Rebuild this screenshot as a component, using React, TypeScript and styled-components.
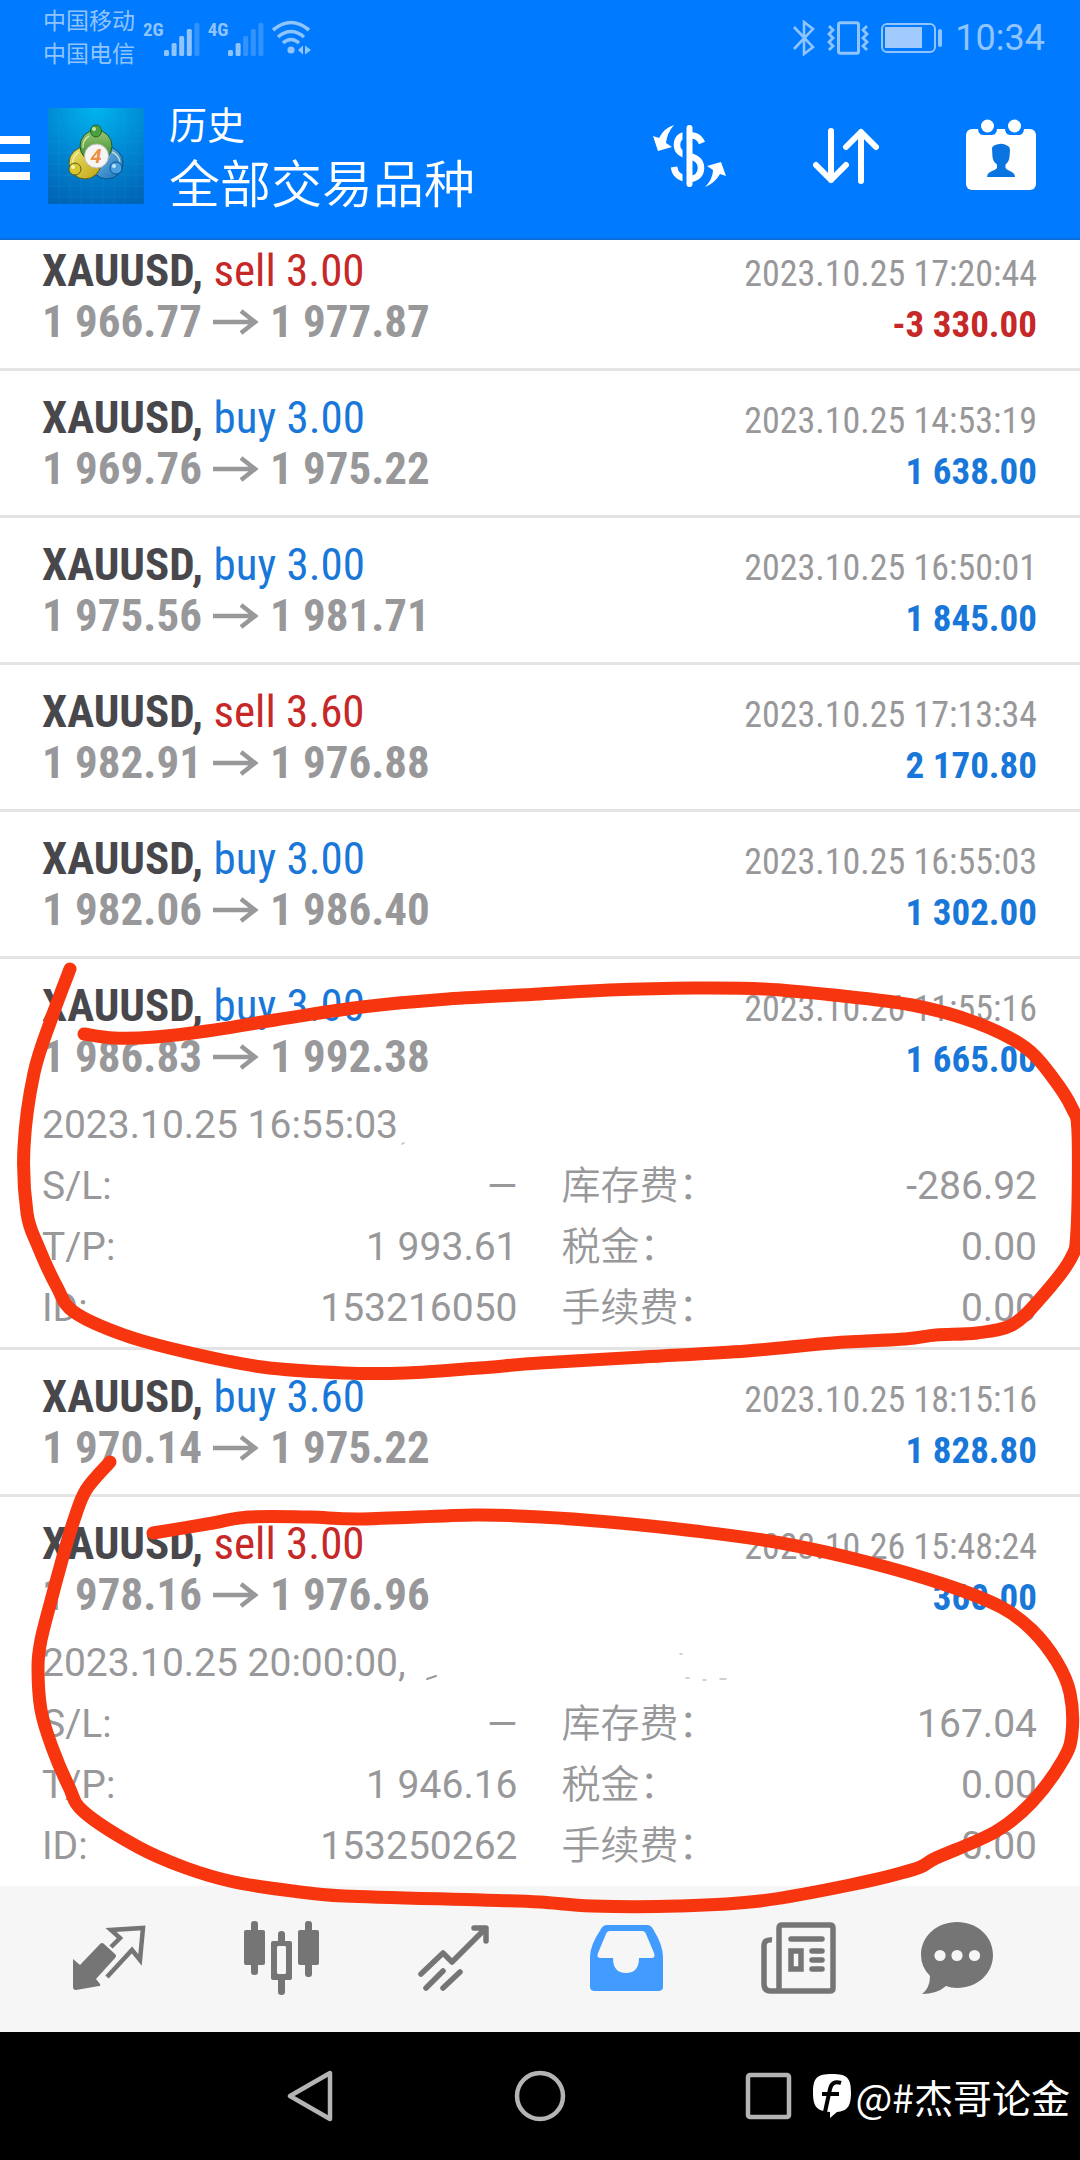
import React from 'react';
import styled, { createGlobalStyle } from 'styled-components';

const condensed = '"Roboto Condensed", "Liberation Sans Narrow", Roboto, "Noto Sans CJK SC", sans-serif';
const regular = 'Roboto, "Noto Sans CJK SC", sans-serif';

const colors = {
  brand: '#007aff',
  status: '#90c4fd',
  sell: '#c62828',
  buy: '#1877d8',
  symbol: '#48484c',
  muted: '#98989a',
  line: '#e4e4e4',
  tab: '#757575',
  active: '#429bff',
  marker: '#f7360f',
};

const GlobalStyle = createGlobalStyle`
  * { box-sizing: border-box; }
  body { margin: 0; background: #000; font-family: ${regular}; }
  button { border: 0; padding: 0; background: none; color: inherit; cursor: pointer; }
  svg { display: block; }
`;

const Page = styled.div`
  position: relative;
  display: flex;
  flex-direction: column;
  min-height: 100vh;
  background: #fff;
  overflow: hidden;
`;

const Top = styled.header`
  background: ${colors.brand};
  color: #fff;
  border-bottom: 2px solid #0d6fdc;
`;

const StatusBar = styled.div`
  display: flex;
  align-items: center;
  justify-content: space-between;
  height: 74px;
  padding: 2px 35px 0 43px;
  color: ${colors.status};
`;

const StatusGroup = styled.div<{ $gap: number }>`
  display: flex;
  align-items: center;
  gap: ${(p) => p.$gap}px;
`;

const Carriers = styled.div`
  font-size: 23px;
  line-height: 33px;
`;

const Signal = styled.div`
  display: flex;
  font: 700 19px/20px ${condensed};
`;

const SignalIcon = styled.svg`
  margin-top: 2px;
`;

const Clock = styled.time`
  font-size: 36px;
  line-height: 40px;
`;

const Toolbar = styled.div`
  display: flex;
  align-items: center;
  height: 164px;
  padding-right: 44px;
`;

const MenuButton = styled.button`
  display: flex;
  flex-direction: column;
  gap: 10px;
  width: 30px;
  margin: 4px 18px 0 0;

  span { height: 8px; background: #fff; }
`;

const Titles = styled.div`
  flex: 1;
  margin-left: 25px;
  padding-top: 6px;
`;

const Title = styled.h1`
  margin: 0;
  font-size: 38px;
  font-weight: 400;
  line-height: 54px;
`;

const Subtitle = styled.div`
  font-size: 51px;
  font-weight: 350;
  line-height: 66px;
`;

const Actions = styled.div`
  display: flex;
  align-items: center;
  gap: 87px;
`;

const List = styled.ul`
  flex: 1;
  margin: 0;
  padding: 0;
  list-style: none;
`;

const Row = styled.li`
  padding: 21px 43px 21px 42px;
  border-bottom: 3px solid ${colors.line};

  &:first-child { padding-top: 5px; }
  &:has(dl) { padding-bottom: 8px; }
  &:last-child { border-bottom: 0; }
`;

const Line = styled.div`
  display: flex;
  align-items: baseline;
  justify-content: space-between;
  height: 51px;
  font-family: ${condensed};
  font-size: 45px;
  line-height: 51px;
  white-space: nowrap;
`;

const Symbol = styled.span`
  color: ${colors.symbol};
  font-weight: 700;
`;

const Side = styled.span<{ $side: string }>`
  color: ${(p) => (p.$side === 'sell' ? colors.sell : colors.buy)};
`;

const CloseTime = styled.time`
  color: ${colors.muted};
  font-size: 36px;
`;

const Prices = styled.span`
  display: flex;
  align-items: center;
  gap: 11px;
  color: ${colors.muted};
  font-weight: 700;
`;

const Profit = styled.span<{ $loss: boolean }>`
  color: ${(p) => (p.$loss ? colors.sell : colors.buy)};
  font-size: 37px;
  font-weight: 700;
`;

const Details = styled.div`
  margin-top: 13px;
  color: ${colors.muted};
  font-size: 39px;
  line-height: 61px;
`;

const Fields = styled.dl`
  display: grid;
  grid-template-columns: 1fr 1fr;
  column-gap: 44px;
  margin: 0;
`;

const Field = styled.div`
  display: flex;
  justify-content: space-between;

  &:nth-child(even) dt { font-weight: 350; }
  dd { margin: 0; }
`;

const Tabs = styled.nav`
  display: grid;
  grid-template-columns: repeat(5, 172fr) 144fr;
  height: 146px;
  padding: 0 51px 3px 23px;
  background: #f6f6f6;
`;

const Tab = styled.button<{ $active?: boolean }>`
  display: flex;
  align-items: center;
  justify-content: center;
  color: ${(p) => (p.$active ? colors.active : colors.tab)};
`;

const SystemNav = styled.nav`
  position: relative;
  display: flex;
  align-items: center;
  justify-content: center;
  gap: 179px;
  height: 128px;
  background: #000;
  color: #b4b4b4;
`;

const Watermark = styled.div`
  position: absolute;
  right: 10px;
  top: 39px;
  display: flex;
  align-items: center;
  gap: 4px;
  color: #fff;
  font: 400 39px/50px "Noto Sans CJK SC", sans-serif;
`;

const Annotation = styled.svg`
  position: absolute;
  inset: 0;
  width: 100%;
  pointer-events: none;
`;

type Detail = { opened: string; tp: string; id: string; swap: string };
type Deal = {
  side: 'buy' | 'sell';
  volume: string;
  open: string;
  close: string;
  time: string;
  profit: string;
  detail?: Detail;
};

const deals: Deal[] = [
  { side: 'sell', volume: '3.00', open: '1 966.77', close: '1 977.87', time: '2023.10.25 17:20:44', profit: '-3 330.00' },
  { side: 'buy', volume: '3.00', open: '1 969.76', close: '1 975.22', time: '2023.10.25 14:53:19', profit: '1 638.00' },
  { side: 'buy', volume: '3.00', open: '1 975.56', close: '1 981.71', time: '2023.10.25 16:50:01', profit: '1 845.00' },
  { side: 'sell', volume: '3.60', open: '1 982.91', close: '1 976.88', time: '2023.10.25 17:13:34', profit: '2 170.80' },
  { side: 'buy', volume: '3.00', open: '1 982.06', close: '1 986.40', time: '2023.10.25 16:55:03', profit: '1 302.00' },
  {
    side: 'buy', volume: '3.00', open: '1 986.83', close: '1 992.38', time: '2023.10.26 11:55:16', profit: '1 665.00',
    detail: { opened: '2023.10.25 16:55:03', tp: '1 993.61', id: '153216050', swap: '-286.92' },
  },
  { side: 'buy', volume: '3.60', open: '1 970.14', close: '1 975.22', time: '2023.10.25 18:15:16', profit: '1 828.80' },
  {
    side: 'sell', volume: '3.00', open: '1 978.16', close: '1 976.96', time: '2023.10.26 15:48:24', profit: '360.00',
    detail: { opened: '2023.10.25 20:00:00,', tp: '1 946.16', id: '153250262', swap: '167.04' },
  },
];

type Point = [number, number];

const firstLoop: Point[] = [
  [70, 969], [52, 1017], [34, 1073], [24, 1147], [27, 1213], [38, 1246], [57, 1287], [74, 1312], [124, 1335],
  [186, 1352], [262, 1367], [344, 1373], [406, 1373], [479, 1368], [540, 1363], [643, 1357], [747, 1351],
  [833, 1343], [905, 1339], [936, 1335], [977, 1333], [1012, 1325], [1039, 1300], [1070, 1260], [1077, 1230],
  [1078, 1133], [1072, 1108], [1053, 1078], [1026, 1048], [977, 1023], [912, 1005], [833, 995], [764, 989],
  [695, 988], [609, 990], [540, 994], [448, 999], [362, 1007], [275, 1020], [207, 1031], [155, 1037],
  [114, 1038], [84, 1034],
];

const secondLoop: Point[] = [
  [110, 1462], [86, 1490], [74, 1520], [64, 1553], [52, 1597], [41, 1640], [38, 1667], [41, 1710], [52, 1747],
  [69, 1787], [84, 1812], [138, 1847], [186, 1868], [234, 1882], [293, 1891], [344, 1896], [482, 1900],
  [540, 1902], [592, 1906], [678, 1906], [760, 1901], [850, 1885], [915, 1869], [936, 1858], [995, 1832],
  [1032, 1802], [1063, 1760], [1072, 1733], [1070, 1693], [1057, 1662], [1032, 1630], [1001, 1607],
  [946, 1585], [867, 1562], [781, 1543], [695, 1531], [609, 1522], [540, 1517], [475, 1515], [362, 1519],
  [310, 1517], [248, 1517], [213, 1523], [153, 1533],
];

/* Runs a smooth pen line through every recorded point. */
function penPath(points: Point[]) {
  let d = `M${points[0][0]} ${points[0][1]}`;
  for (let i = 0; i < points.length - 1; i++) {
    const a = points[Math.max(i - 1, 0)];
    const b = points[i];
    const c = points[i + 1];
    const e = points[Math.min(i + 2, points.length - 1)];
    d += `C${b[0] + (c[0] - a[0]) / 6} ${b[1] + (c[1] - a[1]) / 6} ${c[0] - (e[0] - b[0]) / 6} ${c[1] - (e[1] - b[1]) / 6} ${c[0]} ${c[1]}`;
  }
  return d;
}

function SignalBars({ level }: { level: number }) {
  return (
    <SignalIcon width="36" height="34" viewBox="0 0 36 34" fill="currentColor" aria-hidden="true">
      {[6, 13, 20, 27, 33].map((h, i) => (
        <rect key={h} x={i * 7.6} y={34 - h} width="5" height={h} rx="1.5" opacity={i < level ? 1 : 0.35} />
      ))}
    </SignalIcon>
  );
}

function WifiIcon() {
  return (
    <svg width="40" height="36" viewBox="0 0 40 36" fill="none" stroke="currentColor" strokeWidth="3.6" aria-hidden="true">
      <path d="M1 10Q19 -5 37 10M6 17Q19 6 32 17M11 23Q19 16 27 23" />
      <circle cx="19" cy="30" r="3.600" fill="currentColor" stroke="none" />
      <path d="M31 25.500v9l-5-4.500zM33 25.500v9l6-4.500z" fill="currentColor" stroke="none" />
    </svg>
  );
}

function BluetoothIcon() {
  return (
    <svg width="22" height="36" viewBox="0 0 22 36" fill="none" stroke="currentColor" strokeWidth="2.600" aria-hidden="true">
      <path d="M1 7l19 20-9 7V2l9 7L1 29" />
    </svg>
  );
}

function VibrateIcon() {
  return (
    <svg width="42" height="34" viewBox="0 0 42 34" fill="none" stroke="currentColor" strokeWidth="3" aria-hidden="true">
      <rect x="11.500" y="1.800" width="20" height="30.500" rx="2" />
      <path d="M2 5l4 4-4 4 4 4-4 4 4 4-4 4M40 5l-4 4 4 4-4 4 4 4-4 4 4 4" strokeWidth="2.800" />
    </svg>
  );
}

function BatteryIcon() {
  return (
    <svg width="62" height="30" viewBox="0 0 62 30" aria-hidden="true">
      <rect x="1" y="1" width="53" height="28" rx="5" fill="none" stroke="currentColor" strokeWidth="2" />
      <rect x="4" y="4" width="37" height="21" fill="#a0cbfc" />
      <rect x="57" y="6" width="4" height="18" rx="2" fill="currentColor" />
    </svg>
  );
}

function AppLogo() {
  return (
    <svg width="96" height="96" viewBox="0 0 96 96" aria-hidden="true">
      <defs>
        <radialGradient id="sky" cx="50%" cy="0%" r="105%">
          <stop offset="0" stopColor="#00b4ee" />
          <stop offset="0.500" stopColor="#0089d4" />
          <stop offset="1" stopColor="#0064b4" />
        </radialGradient>
        <linearGradient id="leaf" x2="0" y2="1"><stop stopColor="#9cc873" /><stop offset="1" stopColor="#2c8428" /></linearGradient>
        <linearGradient id="sun" x2="1" y2="1"><stop stopColor="#eee36b" /><stop offset="1" stopColor="#bfa414" /></linearGradient>
        <linearGradient id="sea" x2="1" y2="1"><stop stopColor="#86c4ec" /><stop offset="1" stopColor="#126fba" /></linearGradient>
      </defs>
      <rect width="96" height="96" fill="url(#sky)" />
      <path d="M11 0v96M22 0v96M33 0v96M44 0v96M55 0v96M66 0v96M77 0v96M88 0v96M0 12h96M0 23h96M0 34h96M0 45h96M0 56h96M0 67h96M0 78h96M0 89h96" stroke="#40aef0" strokeWidth="0.600" opacity="0.200" />
      <circle cx="59" cy="55" r="16" fill="url(#sea)" stroke="#0b4f86" />
      <circle cx="37" cy="55" r="16" fill="url(#sun)" stroke="#54631a" />
      <circle cx="48" cy="38" r="16" fill="url(#leaf)" stroke="#1c5a2c" />
      <path d="M35 40a13 13 0 0 1 6-12M25 58a13 13 0 0 1 6-14M64 44a13 13 0 0 1 8 10" fill="none" stroke="#f3f6c8" strokeWidth="1.500" opacity="0.700" />
      <ellipse cx="48" cy="23" rx="5.500" ry="6" fill="#4da040" stroke="#23662b" />
      <circle cx="27" cy="61" r="6" fill="#d9c52e" stroke="#5e5f17" />
      <circle cx="68" cy="60" r="6" fill="#48a0de" stroke="#0d5592" />
      <circle cx="46" cy="21" r="2" fill="#c4e6a8" />
      <circle cx="25" cy="59" r="2" fill="#faf5b4" />
      <circle cx="66" cy="58" r="2" fill="#c3e5fb" />
      <circle cx="48.500" cy="48" r="12" fill="#f5f6f4" stroke="#b6bcb6" />
      <text x="48" y="55" textAnchor="middle" fontFamily="Roboto, sans-serif" fontSize="20" fontWeight="700" fontStyle="italic" fill="#ee8f45">4</text>
    </svg>
  );
}

function CurrencyIcon() {
  return (
    <svg width="73" height="62" viewBox="0 0 73 62" fill="none" stroke="#fff" aria-hidden="true">
      <path d="M49 18C46 11 41 10 34 10C27 10 24 14 24 20C24 27 29 29 36 31C45 33 48 37 48 43C48 50 43 54 36 54C28 54 22 50 21 42" strokeWidth="6.500" />
      <path d="M34 0v62" stroke={colors.brand} strokeWidth="9" />
      <path d="M36.500 3v56" strokeWidth="6" strokeLinecap="round" />
      <path d="M21 0Q11 3 6 13L0 11L5 26L19 22L13 18Q14 8 21 0zM52 62Q62 58 67 49L73 51L68 37L54 41L60 45Q60 54 52 62z" fill="#fff" stroke="none" />
    </svg>
  );
}

function SortIcon() {
  return (
    <svg width="66" height="56" viewBox="0 0 66 56" fill="none" stroke="#fff" strokeWidth="6" strokeLinecap="round" strokeLinejoin="round" aria-hidden="true">
      <path d="M18 3v49M3 37l15 15 15-15M48 53V4M33 19L48 4l15 15" />
    </svg>
  );
}

function AccountIcon() {
  return (
    <svg width="70" height="74" viewBox="0 0 70 74" aria-hidden="true">
      <rect y="10" width="70" height="61" rx="6" fill="#fff" />
      <path d="M12 9h19q0 7-5 7h-9q-5 0-5-7zM39 9h19q0 7-5 7h-9q-5 0-5-7z" fill={colors.brand} />
      <circle cx="21.500" cy="7" r="6.500" fill="#fff" />
      <circle cx="48.500" cy="7" r="6.500" fill="#fff" />
      <path d="M26 29Q27 26 31 25.500Q36 23.500 42 27Q44 28 44 31L43.500 38Q43 43 39.500 45.500V49Q41 51 44 52Q49 54 49 58H21Q21 54 26 52Q29.500 51 31 49V45.500Q27 43 26.500 38z" fill="#0a74e0" />
    </svg>
  );
}

function ArrowIcon() {
  return (
    <svg width="46" height="26" viewBox="0 0 46 26" fill="none" stroke="currentColor" strokeWidth="4.500" aria-hidden="true">
      <path d="M0 13h43M28 2l14 11-14 11" />
    </svg>
  );
}

function QuotesIcon() {
  return (
    <svg width="73" height="66" viewBox="0 0 73 66" aria-hidden="true">
      <path d="M0 34l7 6L27 19q2-2 4 0l11 10q2 2 0 4L23 54l4 5q1 2-1 2L3 65q-3 0-3-3z" fill="currentColor" />
      <path d="M38 22l9-9-9-8 32-2-3 32-8-10-25 27" fill="none" stroke="currentColor" strokeWidth="4.500" />
    </svg>
  );
}

function CandlesIcon() {
  return (
    <svg width="75" height="74" viewBox="0 0 75 74" fill="currentColor" aria-hidden="true">
      <rect x="7" width="7" height="54" rx="3" />
      <rect y="9" width="21" height="35" rx="2" />
      <rect x="61" width="7" height="56" rx="3" />
      <rect x="54" y="9" width="21" height="35" rx="2" />
      <path d="M34 74V59h-5q-2 0-2-2V22q0-2 2-2h5v-7q0-3 3.500-3t3.500 3v7h5q2 0 2 2v35q0 2-2 2h-5v12q0 3-3.500 3T34 71zM34 25q-1 0-1 2v24q0 2 1 2h7q1 0 1-2V27q0-2-1-2z" fillRule="evenodd" />
    </svg>
  );
}

function TrendIcon() {
  return (
    <svg width="71" height="66" viewBox="0 0 71 66" fill="none" stroke="currentColor" strokeWidth="5.500" strokeLinecap="round" strokeLinejoin="round" aria-hidden="true">
      <path d="M3 49l22-21 9 9L67 4M56 3h12v13M25 46L8 63M42 47L25 63" />
    </svg>
  );
}

function InboxIcon() {
  return (
    <svg width="73" height="68" viewBox="0 0 73 68" fill="currentColor" aria-hidden="true">
      <path d="M17 1h40q4 0 6 4 10 16 10 28v30q0 4-5 4H5q-5 0-5-4V33Q0 21 11 5q2-4 6-4zM20 7q-3 0-4 3L8 29q-2 5 3 5h12q0 15 13 15t13-15h12q5 0 3-5L56 10q-1-3-4-3z" fillRule="evenodd" />
    </svg>
  );
}

function NewsIcon() {
  return (
    <svg width="75" height="72" viewBox="0 0 75 72" fill="none" stroke="currentColor" strokeWidth="5.500" aria-hidden="true">
      <path d="M11 18q-8-1-8 6v38q0 7 7 7h59q3 0 3-3V6q0-3-3-3H21q-3 0-3 3v63" />
      <path d="M30 17h31M51 29h10M51 38h10M51 47h10" strokeLinecap="round" />
      <rect x="30" y="29" width="10" height="18" strokeWidth="5.500" />
    </svg>
  );
}

function ChatIcon() {
  return (
    <svg width="72" height="72" viewBox="0 0 72 72" aria-hidden="true">
      <path d="M36 0c20 0 36 14 36 33S56 66 36 66q-6 0-11-2-9 8-24 8 8-6 8-18Q0 45 0 33C0 14 16 0 36 0z" fill="currentColor" />
      <circle cx="19" cy="33.500" r="5.600" fill="#f6f6f6" />
      <circle cx="36" cy="33.500" r="5.600" fill="#f6f6f6" />
      <circle cx="53.500" cy="33.500" r="5.600" fill="#f6f6f6" />
    </svg>
  );
}

function WatermarkLogo() {
  return (
    <svg width="38" height="44" viewBox="0 0 38 44" aria-hidden="true">
      <path d="M19 0c15 0 19 4 19 18.500S34 37 24 38l-7 6v-6C4 37 0 33 0 18.500S4 0 19 0z" fill="#fff" />
      <path d="M28 9q-9-3-11 6l-5 23M9 20h17" fill="none" stroke="#000" strokeWidth="4" />
    </svg>
  );
}

const tabs = [
  { label: '行情', icon: <QuotesIcon /> },
  { label: '图表', icon: <CandlesIcon /> },
  { label: '交易', icon: <TrendIcon /> },
  { label: '历史', icon: <InboxIcon />, active: true },
  { label: '新闻', icon: <NewsIcon /> },
  { label: '聊天', icon: <ChatIcon /> },
];

function DealDetails({ detail }: { detail: Detail }) {
  const fields = [
    ['S/L:', '—'],
    ['库存费：', detail.swap],
    ['T/P:', detail.tp],
    ['税金：', '0.00'],
    ['ID:', detail.id],
    ['手续费：', '0.00'],
  ];
  return (
    <Details>
      <div>{detail.opened}</div>
      <Fields>
        {fields.map(([label, value]) => (
          <Field key={label}>
            <dt>{label}</dt>
            <dd>{value}</dd>
          </Field>
        ))}
      </Fields>
    </Details>
  );
}

function DealRow({ deal }: { deal: Deal }) {
  return (
    <Row>
      <Line>
        <span>
          <Symbol>XAUUSD,</Symbol> <Side $side={deal.side}>{deal.side} {deal.volume}</Side>
        </span>
        <CloseTime>{deal.time}</CloseTime>
      </Line>
      <Line>
        <Prices>
          <span>{deal.open}</span>
          <ArrowIcon />
          <span>{deal.close}</span>
        </Prices>
        <Profit $loss={deal.profit.startsWith('-')}>{deal.profit}</Profit>
      </Line>
      {deal.detail && <DealDetails detail={deal.detail} />}
    </Row>
  );
}

export default function App() {
  return (
    <Page>
      <GlobalStyle />
      <Top>
        <StatusBar>
          <StatusGroup $gap={8}>
            <Carriers>
              <div>中国移动</div>
              <div>中国电信</div>
            </Carriers>
            <Signal>2G<SignalBars level={4} /></Signal>
            <Signal>4G<SignalBars level={2} /></Signal>
            <WifiIcon />
          </StatusGroup>
          <StatusGroup $gap={12}>
            <BluetoothIcon />
            <VibrateIcon />
            <BatteryIcon />
            <Clock>10:34</Clock>
          </StatusGroup>
        </StatusBar>
        <Toolbar>
          <MenuButton aria-label="菜单"><span /><span /><span /></MenuButton>
          <AppLogo />
          <Titles>
            <Title>历史</Title>
            <Subtitle>全部交易品种</Subtitle>
          </Titles>
          <Actions>
            <button aria-label="货币"><CurrencyIcon /></button>
            <button aria-label="排序"><SortIcon /></button>
            <button aria-label="日期"><AccountIcon /></button>
          </Actions>
        </Toolbar>
      </Top>

      <List>
        {deals.map((deal) => <DealRow key={deal.time + deal.open} deal={deal} />)}
      </List>

      <Tabs>
        {tabs.map((tab) => (
          <Tab key={tab.label} aria-label={tab.label} $active={tab.active}>{tab.icon}</Tab>
        ))}
      </Tabs>

      <SystemNav>
        <button aria-label="返回">
          <svg width="48" height="52" viewBox="0 0 48 52" fill="none" stroke="currentColor" strokeWidth="4.500" strokeLinejoin="round">
            <path d="M43 3v46L3 26z" />
          </svg>
        </button>
        <button aria-label="主屏幕">
          <svg width="52" height="52" viewBox="0 0 52 52" fill="none" stroke="currentColor" strokeWidth="4.500">
            <circle cx="26" cy="26" r="23" />
          </svg>
        </button>
        <button aria-label="最近任务">
          <svg width="48" height="48" viewBox="0 0 48 48" fill="none" stroke="currentColor" strokeWidth="4.500">
            <rect x="3" y="3" width="41" height="42" rx="2" />
          </svg>
        </button>
        <Watermark>
          <WatermarkLogo />
          <span>@#杰哥论金</span>
        </Watermark>
      </SystemNav>

      <Annotation viewBox="0 0 1080 2160" fill="none" stroke={colors.marker} strokeWidth="13" strokeLinecap="round" strokeLinejoin="round" aria-hidden="true">
        <g stroke={colors.muted} strokeWidth="2">
          <path d="M427 1679l9-3" />
          <path d="M402 1144l2-1M686 1678h3M703 1680h3M720 1679h6M680 1654h2" strokeWidth="1.500" opacity="0.600" />
        </g>
        <path d={penPath(firstLoop)} />
        <path d={penPath(secondLoop)} />
      </Annotation>
    </Page>
  );
}
